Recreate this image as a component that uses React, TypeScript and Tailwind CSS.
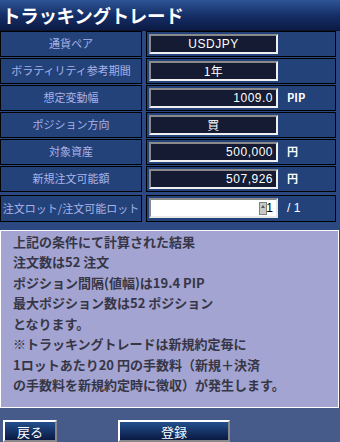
import React from "react";

const jp = { fontFamily: '"Noto Sans CJK JP", "Noto Sans", sans-serif' };
const num = { fontFamily: '"Liberation Sans", "Noto Sans CJK JP", sans-serif' };

function Row({
  label,
  children,
  unit,
  extra = "",
}: {
  label: string;
  children: React.ReactNode;
  unit?: React.ReactNode;
  extra?: string;
}) {
  return (
    <div className={`flex h-[26px] ${extra}`}>
      <div
        className="w-[142px] border border-black bg-[#24427a] flex items-center justify-center text-[11px] text-[#a7b3e8] whitespace-nowrap"
        style={jp}
      >
        {label}
      </div>
      <div className="ml-[4px] w-[190px] border border-black bg-[#24427a] flex items-center pl-[2px]">
        {children}
        {unit && <div className="ml-[9px] text-white text-[11px] font-bold">{unit}</div>}
      </div>
    </div>
  );
}

function Box({ children, align = "center" }: { children: React.ReactNode; align?: "center" | "right" }) {
  return (
    <div
      className={`w-[129px] h-[20px] bg-[#141b32] border-t-2 border-l-2 border-t-[#8a8a8a] border-l-[#8a8a8a] border-b-2 border-r-2 border-b-[#f0f0f0] border-r-[#f0f0f0] flex items-center text-white text-[12px] tracking-[0.5px] ${
        align === "center" ? "justify-center" : "justify-end pr-[3px]"
      }`}
      style={num}
    >
      {children}
    </div>
  );
}

export default function App() {
  const lines = [
    "上記の条件にて計算された結果",
    "注文数は52 注文",
    "ポジション間隔(値幅)は19.4 PIP",
    "最大ポジション数は52 ポジション",
    "となります。",
    "※トラッキングトレードは新規約定毎に",
    "1ロットあたり20 円の手数料（新規＋決済",
    "の手数料を新規約定時に徴収）が発生します。",
  ];
  return (
    <div className="w-[340px] h-[442px] overflow-hidden bg-[#2b4883] flex flex-col" style={jp}>
      <div className="h-[31px] bg-gradient-to-b from-[#2e5596] via-[#163069] to-[#0b1a44] flex items-center pl-[2px] border-b border-[#0a1535]">
        <span className="text-white text-[18.5px] font-bold leading-none tracking-[-0.3px]">
          トラッキングトレード
        </span>
      </div>
      <div className="flex flex-col gap-px pl-0">
        <Row label="通貨ペア">
          <Box>USDJPY</Box>
        </Row>
        <Row label="ボラティリティ参考期間">
          <Box>
            <span style={jp}>1年</span>
          </Box>
        </Row>
        <Row label="想定変動幅" unit="PIP">
          <Box align="right">1009.0</Box>
        </Row>
        <Row label="ポジション方向">
          <Box>
            <span style={jp}>買</span>
          </Box>
        </Row>
        <Row label="対象資産" unit={<span style={jp}>円</span>}>
          <Box align="right">500,000</Box>
        </Row>
        <Row label="新規注文可能額" unit={<span style={jp}>円</span>}>
          <Box align="right">507,926</Box>
        </Row>
        <Row
          label="注文ロット/注文可能ロット"
          extra="mt-[2px] h-[27px]"
          unit={<span className="font-normal text-[12px]" style={num}>/ 1</span>}
        >
          <div className="w-[129px] h-[20px] bg-white border-t-2 border-l-2 border-t-[#8a8a8a] border-l-[#8a8a8a] border-b-2 border-r-2 border-b-[#e8e8e8] border-r-[#e8e8e8] flex items-center justify-end pr-[3px]">
            <div className="w-[8px] h-[13px] bg-[#c8c8c8] border border-[#808080] flex items-start justify-center">
              <div className="w-0 h-0 mt-[2px] border-l-[2px] border-r-[2px] border-b-[3px] border-l-transparent border-r-transparent border-b-[#555]" />
            </div>
            <span className="text-black text-[12px] leading-none ml-[-1px]" style={num}>1</span>
          </div>
        </Row>
      </div>
      <div className="mt-[8px] w-[339px] h-[180px] bg-[#a3a4d1] border border-white pl-[12px] pt-px">
        {lines.map((l, i) => (
          <div key={i} className="text-[13px] font-bold text-[#363646] leading-[20.5px] whitespace-nowrap">
            {l}
          </div>
        ))}
      </div>
      <div className="flex-1 bg-[#475b8b] flex items-start pt-[12px]">
        <button className="ml-[3px] w-[54px] h-[22px] bg-gradient-to-b from-[#24508f] to-[#0a1a42] border-t-2 border-l-2 border-t-white border-l-white border-b-2 border-r-2 border-b-[#8a8a8a] border-r-[#8a8a8a] text-white text-[13px] flex items-center justify-center leading-none">
          戻る
        </button>
        <button className="ml-[61px] w-[112px] h-[22px] bg-gradient-to-b from-[#24508f] to-[#0a1a42] border-t-2 border-l-2 border-t-white border-l-white border-b-2 border-r-2 border-b-[#8a8a8a] border-r-[#8a8a8a] text-white text-[13px] flex items-center justify-center leading-none">
          登録
        </button>
      </div>
    </div>
  );
}
